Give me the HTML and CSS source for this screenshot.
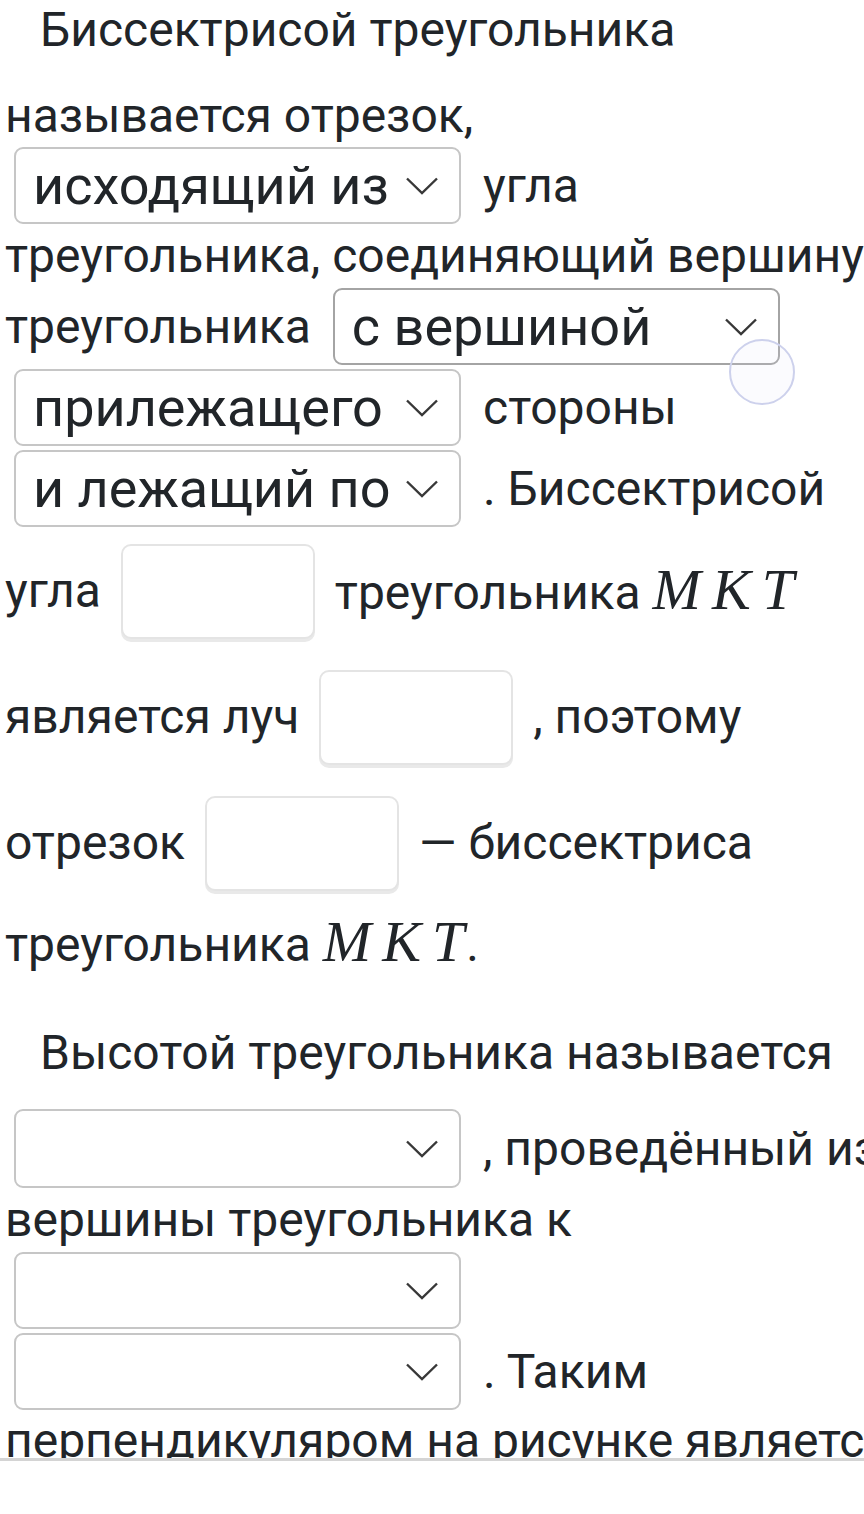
FILE: index.html
```html
<!doctype html>
<html lang="ru">

<head>
  <meta charset="utf-8">
  <meta name="viewport" content="width=device-width, initial-scale=1">
  <title>Биссектриса и высота треугольника</title>
  <link rel="stylesheet" href="styles.css">
</head>

<body>
  <div class="page">
    <div class="task">
      <div class="row title">Биссектрисой треугольника</div>
      <div class="row r2">называется отрезок,</div>
      <div class="row sel-row r3">
        <div class="select first"><span class="select-value">исходящий из</span><svg class="chevron" viewBox="0 0 32 18"><path d="M1 1.5 L16 16 L31 1.5" /></svg></div>
        <span>угла</span>
      </div>
      <div class="row r4">треугольника, соединяющий вершину</div>
      <div class="row sel-row">
        <span>треугольника</span>
        <div class="select hover"><span class="select-value">с вершиной</span><svg class="chevron" viewBox="0 0 32 18"><path d="M1 1.5 L16 16 L31 1.5" /></svg></div>
      </div>
      <div class="row sel-row">
        <div class="select first"><span class="select-value">прилежащего</span><svg class="chevron" viewBox="0 0 32 18"><path d="M1 1.5 L16 16 L31 1.5" /></svg></div>
        <span>стороны</span>
      </div>
      <div class="row sel-row">
        <div class="select first"><span class="select-value">и лежащий по</span><svg class="chevron" viewBox="0 0 32 18"><path d="M1 1.5 L16 16 L31 1.5" /></svg></div>
        <span>. Биссектрисой</span>
      </div>
      <div class="row box-row r8">
        <span>угла</span>
        <div class="answer-box"></div>
        <span>треугольника <span class="math"><i>M</i><i>K</i><i>T</i></span></span>
      </div>
      <div class="row box-row r9">
        <span>является луч</span>
        <div class="answer-box"></div>
        <span>, поэтому</span>
      </div>
      <div class="row box-row r9">
        <span>отрезок</span>
        <div class="answer-box"></div>
        <span>— биссектриса</span>
      </div>
      <div class="row r11"><span>треугольника <span class="math"><i>M</i><i>K</i><i>T</i></span>.</span></div>

      <div class="row title r12">Высотой треугольника называется</div>
      <div class="row sel-row r13">
        <div class="select first"><span class="select-value"></span><svg class="chevron" viewBox="0 0 32 18"><path d="M1 1.5 L16 16 L31 1.5" /></svg></div>
        <span>, проведённый из</span>
      </div>
      <div class="row r14">вершины треугольника к</div>
      <div class="row sel-row">
        <div class="select first"><span class="select-value"></span><svg class="chevron" viewBox="0 0 32 18"><path d="M1 1.5 L16 16 L31 1.5" /></svg></div>
      </div>
      <div class="row sel-row">
        <div class="select first"><span class="select-value"></span><svg class="chevron" viewBox="0 0 32 18"><path d="M1 1.5 L16 16 L31 1.5" /></svg></div>
        <span>. Таким</span>
      </div>
      <div class="row r17">перпендикуляром на рисунке является</div>
    </div>
    <div class="touch-ring"></div>
  </div>
</body>

</html>
```

FILE: styles.css
```css
body {
  margin: 0px;
  background: #fff;
}

.page {
  position: relative;
  width: 864px;
  height: 1514px;
  overflow: hidden;
}

.task {
  height: 1458px;
  overflow: hidden;
  border-bottom: 3px solid #d4d4d4;
  padding-left: 5px;
  font-family: Roboto, "Noto Sans", sans-serif;
  font-size: 48px;
  line-height: 56px;
  color: #212529;
  white-space: nowrap;
}

.row {
  display: flex;
  align-items: center;
  gap: 20px;
  height: 56px;
}

.title {
  padding-left: 35px;
  margin-top: 2px;
}

.r2 {
  margin-top: 30px;
}

.sel-row {
  height: 77px;
  margin-top: 4px;
  gap: 22px;
}

.r3 {
  margin-top: 3px;
}

.r4 {
  margin-top: 4px;
}

.box-row {
  height: 96px;
}

.r8 {
  margin-top: 16px;
}

.r9 {
  margin-top: 30px;
}

.r11 {
  margin-top: 24px;
}

.r12 {
  margin-top: 54px;
}

.r13 {
  margin-top: 28px;
  height: 79px;
}

.r14 {
  margin-top: 4px;
}

.r17 {
  margin-top: 3px;
}

/* dropdown */
.select {
  flex: none;
  display: flex;
  align-items: center;
  box-sizing: border-box;
  width: 447px;
  height: 100%;
  padding: 0 21px 0 17px;
  border: 2px solid #c6c6c6;
  border-radius: 9px;
  background: #fff;
}

.select.first {
  margin-left: 9px;
}

.select.hover {
  border-color: #a4a4a4;
}

.select-value {
  flex: 1;
  overflow: hidden;
  font-size: 54px;
  line-height: 70px;
}

.chevron {
  flex: none;
  width: 32px;
  height: 18px;
  margin-left: 10px;
}

.chevron path {
  fill: none;
  stroke: #383838;
  stroke-width: 2.4;
}

/* empty input */
.answer-box {
  flex: none;
  box-sizing: border-box;
  width: 194px;
  height: 95px;
  border: 2px solid #e4e4e4;
  border-radius: 10px;
  box-shadow: 0 3px 0 #e9e9e9;
  background: #fff;
}

.math {
  font-family: "Liberation Serif", serif;
  font-size: 1.21em;
}

.math i {
  font-style: italic;
  margin-right: 11px;
}

.math i:last-child {
  margin-right: 2px;
}

.touch-ring {
  position: absolute;
  left: 729px;
  top: 339px;
  width: 62px;
  height: 62px;
  border: 2px solid #cdd1ec;
  border-radius: 50%;
  background: rgba(220, 224, 245, 0.12);
}
```
